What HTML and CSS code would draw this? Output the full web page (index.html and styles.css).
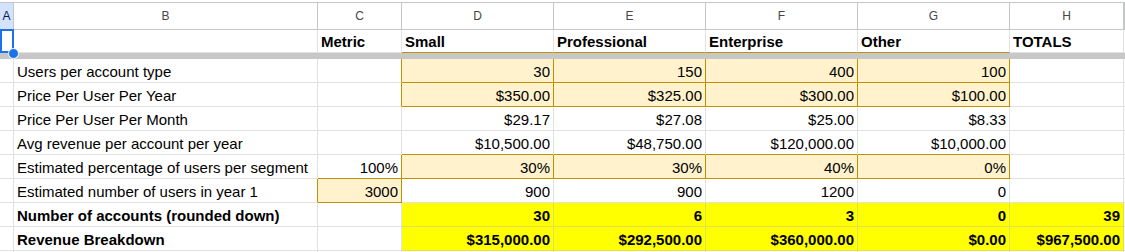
FILE: index.html
```html
<!DOCTYPE html>
<html>
<head>
<meta charset="utf-8">
<link rel="stylesheet" href="styles.css">
</head>
<body>
<div class="sheet">
  <div class="row colhead">
    <div class="c sel-head">A</div><div class="c">B</div><div class="c">C</div><div class="c">D</div><div class="c">E</div><div class="c">F</div><div class="c">G</div><div class="c">H</div><div class="c"></div>
  </div>
  <div class="row r1">
    <div class="c"></div><div class="c"></div><div class="c b">Metric</div><div class="c b gb">Small</div><div class="c b gb">Professional</div><div class="c b gb">Enterprise</div><div class="c b gb">Other</div><div class="c b">TOTALS</div><div class="c"></div>
  </div>
  <div class="freeze"></div>
  <div class="row">
    <div class="c"></div><div class="c">Users per account type</div><div class="c gr"></div><div class="c n org gr gb">30</div><div class="c n org gr gb">150</div><div class="c n org gr gb">400</div><div class="c n org gr gb">100</div><div class="c"></div><div class="c"></div>
  </div>
  <div class="row">
    <div class="c"></div><div class="c">Price Per User Per Year</div><div class="c gr"></div><div class="c n org gr gb">$350.00</div><div class="c n org gr gb">$325.00</div><div class="c n org gr gb">$300.00</div><div class="c n org gr gb">$100.00</div><div class="c"></div><div class="c"></div>
  </div>
  <div class="row">
    <div class="c"></div><div class="c">Price Per User Per Month</div><div class="c"></div><div class="c n">$29.17</div><div class="c n">$27.08</div><div class="c n">$25.00</div><div class="c n">$8.33</div><div class="c"></div><div class="c"></div>
  </div>
  <div class="row">
    <div class="c"></div><div class="c">Avg revenue per account per year</div><div class="c"></div><div class="c n gb">$10,500.00</div><div class="c n gb">$48,750.00</div><div class="c n gb">$120,000.00</div><div class="c n gb">$10,000.00</div><div class="c"></div><div class="c"></div>
  </div>
  <div class="row">
    <div class="c"></div><div class="c">Estimated percentage of users per segment</div><div class="c n gr gb">100%</div><div class="c n org gr gb">30%</div><div class="c n org gr gb">30%</div><div class="c n org gr gb">40%</div><div class="c n org gr gb">0%</div><div class="c"></div><div class="c"></div>
  </div>
  <div class="row">
    <div class="c"></div><div class="c gr">Estimated number of users in year 1</div><div class="c n org gr gb">3000</div><div class="c n">900</div><div class="c n">900</div><div class="c n">1200</div><div class="c n">0</div><div class="c"></div><div class="c"></div>
  </div>
  <div class="row">
    <div class="c"></div><div class="c b">Number of accounts (rounded down)</div><div class="c"></div><div class="c n b yel">30</div><div class="c n b yel">6</div><div class="c n b yel">3</div><div class="c n b yel">0</div><div class="c n b yel">39</div><div class="c"></div>
  </div>
  <div class="row">
    <div class="c"></div><div class="c b">Revenue Breakdown</div><div class="c"></div><div class="c n b yel">$315,000.00</div><div class="c n b yel">$292,500.00</div><div class="c n b yel">$360,000.00</div><div class="c n b yel">$0.00</div><div class="c n b yel">$967,500.00</div><div class="c"></div>
  </div>
  <div class="row last">
    <div class="c"></div><div class="c"></div><div class="c"></div><div class="c"></div><div class="c"></div><div class="c"></div><div class="c"></div><div class="c"></div><div class="c"></div>
  </div>
  <div class="sel-box"></div>
  <div class="handle"></div>
</div>
</body>
</html>
```

FILE: styles.css
```css
html, body {
  margin: 0;
  padding: 0;
  background: #ffffff;
  overflow: hidden;
}

.sheet {
  position: relative;
  box-sizing: border-box;
  height: 252px;
  overflow: hidden;
  padding-top: 2px;
  font-family: "Liberation Sans", Arial, sans-serif;
  color: #000000;
}

.row {
  display: grid;
  grid-template-columns: 14px 304px 84px 152px 152px 152px 152px 114px 1fr;
}

.c {
  box-sizing: border-box;
  height: 24px;
  border-right: 1px solid #e2e2e2;
  border-bottom: 1px solid #e2e2e2;
  padding: 2px 3px 0 3px;
  line-height: 21px;
  font-size: 15px;
  white-space: nowrap;
  overflow: hidden;
}

.colhead {
  border-top: 1px solid #c4c7c5;
}

.colhead .c {
  height: 27px;
  padding: 0;
  line-height: 26px;
  font-size: 12px;
  text-align: center;
  color: #444746;
  border-color: #c4c7c5;
}

.colhead .sel-head {
  background: #d3e3fd;
  color: #041e49;
}

.r1 .c {
  height: 23px;
  padding-top: 1px;
}

.last .c {
  height: 2px;
  border-bottom: none;
}

.freeze {
  height: 6px;
  background: #c7c7c7;
}

.b {
  font-weight: bold;
}

.n {
  text-align: right;
}

.org {
  background: #fff2cc;
}

.yel {
  background: #ffff00;
  border-color: #e0e052;
}

.c.gr {
  border-right-color: #bf9000;
}

.c.gb {
  border-bottom-color: #bf9000;
}

.sel-box {
  position: absolute;
  left: 0;
  top: 29px;
  width: 14px;
  height: 24px;
  box-sizing: border-box;
  border: 2px solid #1a73e8;
}

.handle {
  position: absolute;
  left: 8px;
  top: 48px;
  width: 9px;
  height: 9px;
  border-radius: 50%;
  background: #1a73e8;
  border: 1px solid #ffffff;
}
```
